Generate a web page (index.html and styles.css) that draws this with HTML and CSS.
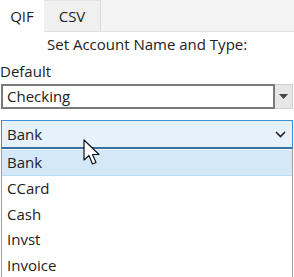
FILE: index.html
```html
<!DOCTYPE html>
<html>
<head>
<meta charset="utf-8">
<link rel="stylesheet" href="styles.css">
</head>
<body>
<div class="panel">
  <div class="tabs">
    <div class="tab active">QIF</div>
    <div class="tab">CSV</div>
    <div class="tab-fill"></div>
  </div>
  <div class="title">Set Account Name and Type:</div>
  <div class="label">Default</div>
  <div class="combo">
    <div class="combo-text">Checking</div>
    <div class="combo-btn">
      <svg width="9" height="5" viewBox="0 0 9 5"><path d="M0 0H9L4.5 5Z" fill="#444"/></svg>
    </div>
  </div>
  <div class="select">
    <span>Bank</span>
    <svg class="chev" width="11" height="7" viewBox="0 0 11 7"><path d="M1 1L5.5 5.5L10 1" fill="none" stroke="#222" stroke-width="1.6"/></svg>
  </div>
  <div class="list">
    <div class="item selected">Bank</div>
    <div class="item">CCard</div>
    <div class="item">Cash</div>
    <div class="item">Invst</div>
    <div class="item">Invoice</div>
  </div>
  <svg class="cursor" width="20" height="28" viewBox="0 0 20 28">
    <path d="M1 1V21L6 16.5L9.5 25L13 23.5L9.5 15.5H16Z" fill="#fff" stroke="#111" stroke-width="1.2" stroke-linejoin="round"/>
  </svg>
</div>
</body>
</html>
```
FILE: styles.css
```css
html, body {
  margin: 0;
  padding: 0;
  background: #fff;
}
.panel {
  position: relative;
  width: 294px;
  height: 277px;
  overflow: hidden;
  font-family: "Open Sans", "Noto Sans", sans-serif;
  font-size: 15px;
  color: #222;
}
.tabs {
  display: flex;
  height: 31px;
  background: #f0f0f0;
  border-bottom: 1px solid #e0e0e0;
}
.tab {
  display: flex;
  align-items: center;
  justify-content: center;
  height: 31px;
  box-sizing: border-box;
}
.tab.active {
  width: 44px;
  background: #fff;
  height: 32px;
}
.tab:not(.active) {
  width: 57px;
  background: #f0f0f0;
  border-right: 1px solid #dadada;
  border-top: 1px solid #e4e4e4;
}
.tab-fill {
  flex: 1;
  background: #f3f3f3;
}
.title {
  margin: 2px 0 0 47px;
  height: 21px;
  line-height: 21px;
}
.label {
  margin-top: 6px;
  height: 21px;
  line-height: 21px;
}
.combo {
  display: flex;
  margin: 2px 1px 0 1px;
  height: 25px;
}
.combo-text {
  flex: 1;
  border: 2px solid #7a7a7a;
  padding-left: 4px;
  line-height: 21px;
  background: #fff;
}
.combo-btn {
  width: 17px;
  background: #e6e6e6;
  border: 1px solid #d0d0d0;
  border-left: none;
  display: flex;
  align-items: center;
  justify-content: center;
}
.select {
  display: flex;
  align-items: center;
  justify-content: space-between;
  margin: 11px 1px 0 1px;
  height: 29px;
  box-sizing: border-box;
  border: 1px solid #3d8fd9;
  border-bottom: 2px solid #3b6f9f;
  background: #e5f1fb;
  padding: 0 6px 0 5px;
}
.list {
  margin: 0 1px 0 1px;
  border-left: 1px solid #a0a0a0;
  border-right: 1px solid #a0a0a0;
  padding-top: 1px;
  height: 140px;
}
.item {
  height: 25.5px;
  line-height: 25px;
  padding-left: 5px;
}
.item.selected {
  background: #d5e8f8;
  border-bottom: 1px solid #bcdcf4;
  height: 26px;
  box-sizing: border-box;
}
.cursor {
  position: absolute;
  left: 83px;
  top: 139px;
}
```
